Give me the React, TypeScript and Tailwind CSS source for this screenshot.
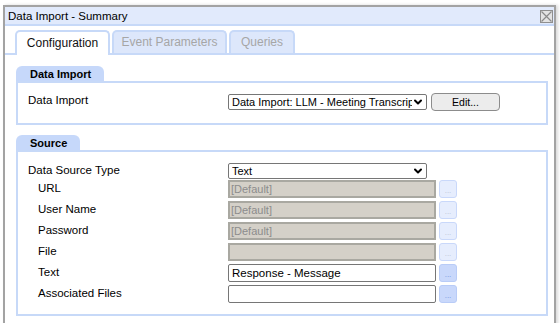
import { ChevronDown } from 'lucide-react'

const font = "font-['Liberation_Sans',Arial,sans-serif]"

function FakeSelect({ value }: { value: string }) {
  return (
    <div className="flex items-center w-[199px] h-[16px] border border-[#767676] rounded-[2px] bg-white pl-[3px] pr-[2px] overflow-hidden">
      <span className="flex-1 overflow-hidden whitespace-nowrap text-[11px] leading-[14px] text-black">{value}</span>
      <ChevronDown className="w-[12px] h-[12px] shrink-0 text-black" strokeWidth={4} />
    </div>
  )
}

function Dots({ disabled }: { disabled?: boolean }) {
  return (
    <div
      className={
        disabled
          ? 'w-[18px] h-[18px] rounded-[3px] border border-[#c9d8fa] bg-[#e6edfd] flex items-end justify-center pb-[2px] text-[8px] leading-[8px] text-[#bcc4d4]'
          : 'w-[18px] h-[18px] rounded-[3px] border border-[#b9ccf7] bg-[#c9d8fb] flex items-end justify-center pb-[2px] text-[8px] leading-[8px] text-[#7395e0]'
      }
    >
      ...
    </div>
  )
}

function Field({ value, disabled }: { value?: string; disabled?: boolean }) {
  return (
    <div className="flex items-center gap-[3px]">
      {disabled ? (
        <div className="w-[208px] h-[18px] border-2 border-[#a9a8a1] bg-[#d4d0c8] pl-[1px] text-[11px] leading-[14px] text-[#8c8c8c]">
          {value}
        </div>
      ) : (
        <div className="w-[208px] h-[18px] border border-[#767676] rounded-[2px] bg-white pl-[3px] text-[11.5px] leading-[16px] text-black">
          {value}
        </div>
      )}
      <Dots disabled={disabled} />
    </div>
  )
}

function SectionHeader({ title, width }: { title: string; width: string }) {
  return (
    <div className={`${width} h-[16px] bg-[#c6d8fa] rounded-t-[6px] pl-[14px] text-[11px] leading-[16px] font-bold text-black`}>
      {title}
    </div>
  )
}

export default function App() {
  const rows = [
    { label: 'URL', value: '[Default]', disabled: true },
    { label: 'User Name', value: '[Default]', disabled: true },
    { label: 'Password', value: '[Default]', disabled: true },
    { label: 'File', value: '', disabled: true },
    { label: 'Text', value: 'Response - Message', disabled: false },
    { label: 'Associated Files', value: '', disabled: false },
  ]

  return (
    <div className={`${font} w-[560px] h-[323px] bg-white overflow-hidden pt-[5px] pl-[3px]`}>
      <div className="w-[553px] h-[330px] border-2 border-b-0 border-[#a3a3a3] shadow-[2px_0_3px_rgba(0,0,0,0.15)] bg-white">
        {/* title bar */}
        <div className="h-[19px] bg-[#e1eafc] border-b-2 border-[#c7d9f8] flex items-center justify-between pl-[3px] pr-[1px]">
          <span className="text-[11.5px] leading-[16px] text-black">Data Import - Summary</span>
          <div className="w-[13px] h-[13px] border border-[#8f8f8f] bg-[#e3e3e3] mt-[2px]">
            <svg viewBox="0 0 11 11" className="w-[11px] h-[11px]">
              <path d="M0.5 0.5 L10.5 10.5 M10.5 0.5 L0.5 10.5" stroke="#8a8a8a" strokeWidth="1.2" fill="none" />
            </svg>
          </div>
        </div>

        {/* tabs */}
        <div className="pt-[4px] pl-[10px] flex items-end gap-[2px] border-b-2 border-[#c7d9f8] h-[29px]">
          <div className="w-[95px] h-[25px] -mb-[2px] bg-white border-2 border-b-0 border-[#c7d9f8] rounded-t-[5px] text-[12px] leading-[22px] text-center text-[#111]">
            Configuration
          </div>
          <div className="w-[115px] h-[23px] bg-[#dde7fb] border-2 border-b-0 border-[#c7d9f8] rounded-t-[5px] text-[12px] leading-[21px] text-center text-[#a6a6a6]">
            Event Parameters
          </div>
          <div className="w-[66px] h-[23px] bg-[#dde7fb] border-2 border-b-0 border-[#c7d9f8] rounded-t-[5px] text-[12px] leading-[21px] text-center text-[#a6a6a6]">
            Queries
          </div>
        </div>

        {/* content */}
        <div className="pt-[11px] pl-[11px] pr-[6px] flex flex-col gap-[10px]">
          <div>
            <SectionHeader title="Data Import" width="w-[88px]" />
            <div className="-mt-[1px] h-[44px] border-2 border-[#c7d9f8] pl-[10px] pt-[10px] flex">
              <div className="w-[200px] text-[11.5px] leading-[14px] text-black">Data Import</div>
              <div className="flex items-start gap-[4px] pt-[1px]">
                <FakeSelect value="Data Import: LLM - Meeting Transcript" />
                <div className="w-[69px] h-[18px] -mt-[1px] rounded-[4px] border border-[#8c8c8c] bg-[#ececec] text-[10.5px] leading-[16px] text-center text-black">
                  Edit...
                </div>
              </div>
            </div>
          </div>

          <div>
            <SectionHeader title="Source" width="w-[64px]" />
            <div className="-mt-[1px] h-[166px] border-2 border-[#c7d9f8] pl-[10px] pt-[11px] flex flex-col gap-[3px]">
              <div className="flex items-start -mb-[2px]">
                <div className="w-[200px] text-[11.5px] leading-[14px] text-black">Data Source Type</div>
                <FakeSelect value="Text" />
              </div>
              {rows.map(r => (
                <div key={r.label} className="flex items-start">
                  <div className="w-[200px] pl-[10px] text-[11.5px] leading-[14px] text-black pt-[1px]">{r.label}</div>
                  <Field value={r.value} disabled={r.disabled} />
                </div>
              ))}
            </div>
          </div>
        </div>
      </div>
    </div>
  )
}
